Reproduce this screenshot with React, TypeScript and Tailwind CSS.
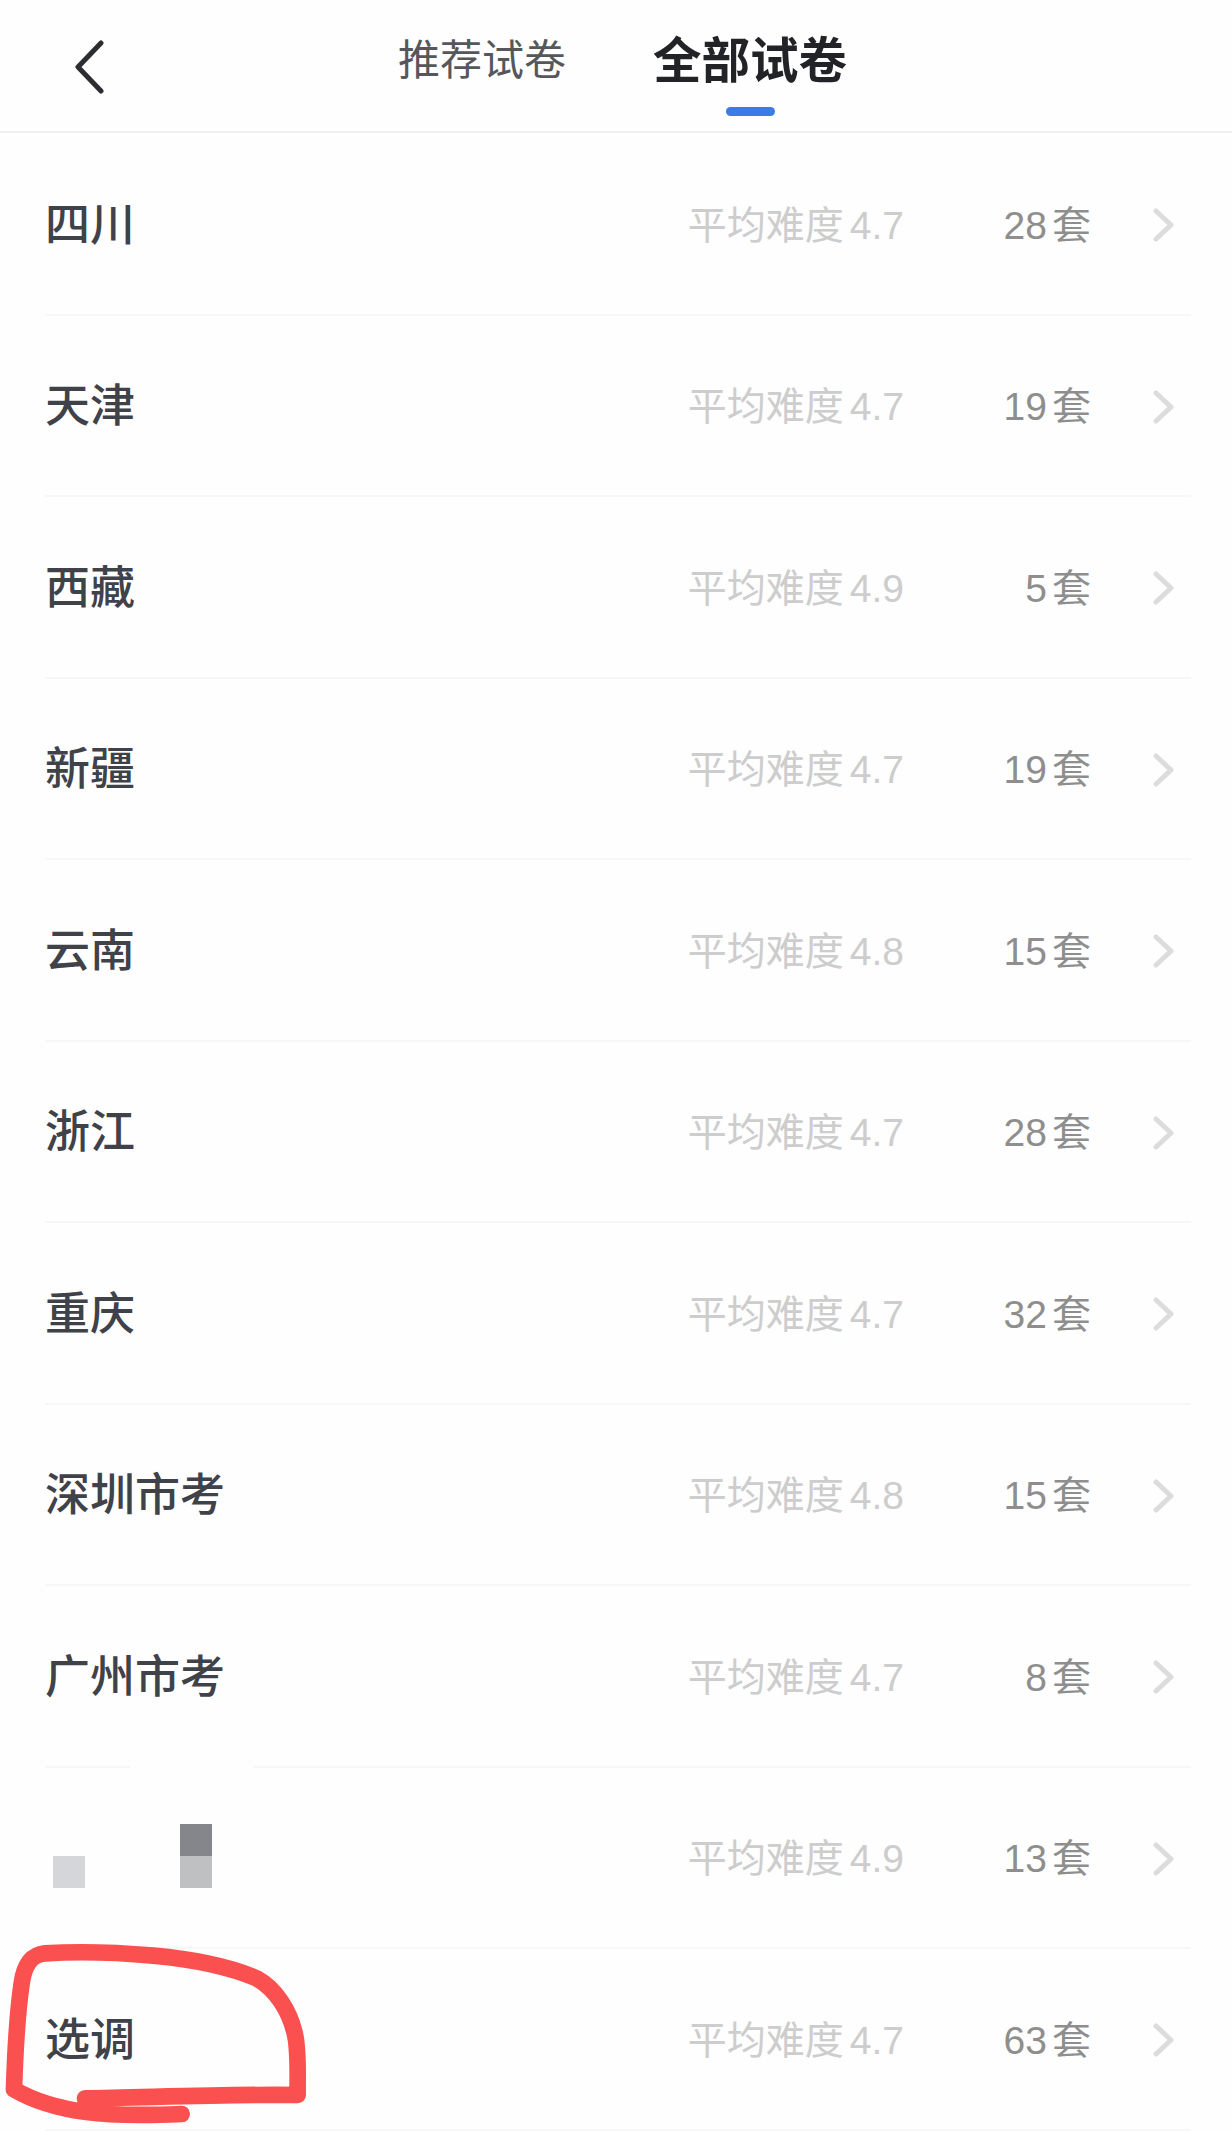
const FONT = "font-['Liberation_Sans','Noto_Sans_CJK_SC',sans-serif]";

type RowData = {
  name?: string;
  score: string;
  count: string;
};

const ROWS: RowData[] = [
  { name: "四川", score: "4.7", count: "28" },
  { name: "天津", score: "4.7", count: "19" },
  { name: "西藏", score: "4.9", count: "5" },
  { name: "新疆", score: "4.7", count: "19" },
  { name: "云南", score: "4.8", count: "15" },
  { name: "浙江", score: "4.7", count: "28" },
  { name: "重庆", score: "4.7", count: "32" },
  { name: "深圳市考", score: "4.8", count: "15" },
  { name: "广州市考", score: "4.7", count: "8" },
  { score: "4.9", count: "13" },
  { name: "选调", score: "4.7", count: "63" },
];

// the pixelated name in the tenth row
function Mosaic() {
  return (
    <div className="-mt-[5px] ml-2 flex items-end gap-[95px]">
      <div className="h-8 w-8 bg-[#d5d6d9]" />
      <div className="flex w-8 flex-col">
        <div className="h-8 bg-[#85868c]" />
        <div className="h-8 bg-[#bfc0c2]" />
      </div>
    </div>
  );
}

function Row({ row, index }: { row: RowData; index: number }) {
  return (
    <div className="relative flex h-[181.5px] items-center border-b-2 border-[#f7f7f7] pt-[3px] pr-[17px]">
      {/* the mosaic's white patch cuts the line above the tenth row */}
      {index === 8 && (
        <div className="absolute -bottom-[2px] left-[85px] h-[2px] w-[123px] bg-[#fefefe]" />
      )}
      <div className="flex-1 text-[45px] font-medium leading-none text-[#3f4249]">
        {row.name ?? <Mosaic />}
      </div>
      <div className="flex items-center text-[39px] leading-none text-[#cdcdcd]">
        <span>平均难度</span>
        <span className="ml-[6px]">{row.score}</span>
      </div>
      <div className="flex w-[187px] items-center justify-end text-[39px] leading-none text-[#8e8e8e]">
        <span>{row.count}</span>
        <span className="ml-[5px]">套</span>
      </div>
      <svg
        className="ml-[62px]"
        width="21"
        height="34"
        viewBox="0 0 21 34"
        fill="none"
        stroke="#dcdcdc"
        strokeWidth="5"
        strokeLinecap="round"
        strokeLinejoin="round"
      >
        <path d="M3 3 L18 17 L3 31" />
      </svg>
    </div>
  );
}

export default function App() {
  return (
    <div className={`relative h-[2131px] w-[1232px] overflow-hidden bg-[#fefefe] ${FONT}`}>
      <header className="relative flex h-[133px] items-start border-b-2 border-[#f1f1f1] pl-[75px]">
        <svg
          className="mt-[40px]"
          width="30"
          height="54"
          viewBox="0 0 30 54"
          fill="none"
          stroke="#2b2d31"
          strokeWidth="5"
          strokeLinecap="round"
          strokeLinejoin="round"
        >
          <path d="M26 3 L3 27 L26 51" />
        </svg>
        <div className="ml-[293px] mt-[38px] text-[42px] leading-[46px] text-[#55575b]">
          推荐试卷
        </div>
        <div className="ml-[87px] mt-[34px] flex flex-col items-center">
          <div className="text-[48.5px] font-bold leading-[54px] text-[#222326]">
            全部试卷
          </div>
          <div className="mt-[19px] h-[9px] w-[49px] rounded-full bg-[#3b7be8]" />
        </div>
      </header>

      <main className="pl-[45px] pr-[41px] pt-[1px]">
        {ROWS.map((row, i) => (
          <Row key={i} row={row} index={i} />
        ))}
      </main>

      {/* hand-drawn red marking round the last row */}
      <svg
        className="absolute left-0 top-[1740px]"
        width="400"
        height="391"
        viewBox="0 0 1200 1173"
        fill="none"
        stroke="#fb5050"
        strokeWidth="50"
        strokeLinecap="round"
        strokeLinejoin="round"
      >
        <path d="M545 1122 C450 1126 330 1126 260 1116 C180 1106 100 1082 42 1048 C45 950 52 820 65 730 C72 680 90 645 135 640 C230 634 350 637 460 647 C570 657 680 677 770 715 C830 748 868 815 883 875 C897 925 892 1000 893 1065 C700 1062 450 1072 255 1075" />
      </svg>
    </div>
  );
}
